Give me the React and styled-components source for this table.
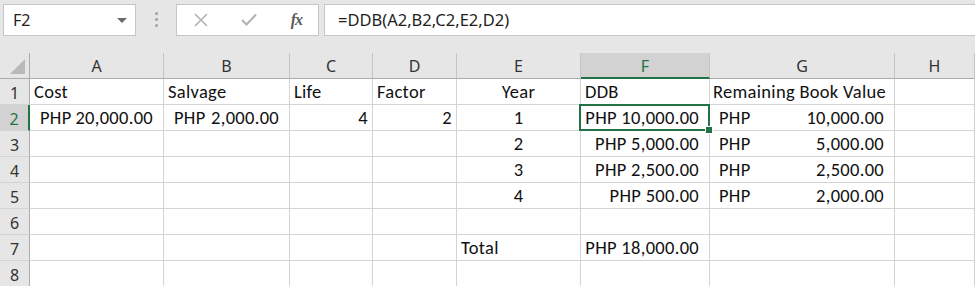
import React from 'react';
import styled, { createGlobalStyle, css } from 'styled-components';

const GlobalStyle = createGlobalStyle`
  html, body {
    margin: 0;
    padding: 0;
    background: #ffffff;
  }
  body {
    font-family: "Carlito", "Lato", "Liberation Sans", sans-serif;
    overflow: hidden;
  }
`;

const COLS = ['A', 'B', 'C', 'D', 'E', 'F', 'G', 'H'];
const SELECTED_COL = 'F';
const SELECTED_ROW = 2;

const Window = styled.div`
  width: 975px;
  height: 286px;
  background: #e6e6e6;
  overflow: hidden;
`;

const Toolbar = styled.div`
  display: flex;
  align-items: center;
  height: 46px;
  padding: 0 0 7px 3px;
  box-sizing: border-box;
  margin-bottom: 7px;
  font-family: "Noto Sans", "Open Sans", sans-serif;
`;

const Box = styled.div`
  height: 32px;
  box-sizing: border-box;
  background: #ffffff;
  border: 1px solid #c6c6c6;
  display: flex;
  align-items: center;
`;

const NameBox = styled(Box)`
  width: 133px;
  padding: 0 8px 0 9px;
  justify-content: space-between;
  font-size: 16px;
  color: #222;
`;

const Caret = styled.span`
  width: 0;
  height: 0;
  border-left: 5px solid transparent;
  border-right: 5px solid transparent;
  border-top: 5px solid #6a6a6a;
  margin-top: 2px;
`;

const Grip = styled.div`
  width: 40px;
  display: flex;
  flex-direction: column;
  align-items: center;
  gap: 3px;
  span {
    width: 3px;
    height: 3px;
    border-radius: 50%;
    background: #a0a0a0;
  }
`;

const ButtonsBox = styled(Box)`
  width: 143px;
  justify-content: space-between;
  padding: 0 16px 0 17px;
  margin-right: 5px;
`;

const Fx = styled.span`
  font-family: "Liberation Serif", "DejaVu Serif", serif;
  font-style: italic;
  font-weight: bold;
  font-size: 16px;
  color: #5a5a5a;
  letter-spacing: -1px;
`;

const FormulaBox = styled(Box)`
  flex: 1;
  padding-left: 13px;
  font-size: 16.5px;
  color: #1e1e1e;
  border-right: none;
`;

const Sheet = styled.div`
  display: grid;
  grid-template-columns: 30px 134px 126px 83px 84px 124px 129px 185px 1fr;
  grid-auto-rows: 26px;
  background: #ffffff;
`;

const HeadCell = styled.div`
  box-sizing: border-box;
  background: ${({ $active }) => ($active ? '#d2d2d2' : '#e6e6e6')};
  color: ${({ $active }) => ($active ? '#217346' : '#333')};
  font-family: "Noto Sans", "Open Sans", sans-serif;
  font-size: 16px;
  display: flex;
  align-items: center;
  justify-content: center;
  border-right: 1px solid #c4c4c4;
  border-bottom: 1px solid #ababab;
  ${({ $active }) =>
    $active &&
    css`
      border-bottom: 2px solid #217346;
    `}
`;

const ColHead = styled(HeadCell)`
  padding-top: 1px;
`;

const Corner = styled(HeadCell)`
  position: relative;
  border-right: 1px solid #ababab;
  &::after {
    content: '';
    position: absolute;
    right: 4px;
    bottom: 4px;
    width: 0;
    height: 0;
    border-left: 15px solid transparent;
    border-bottom: 15px solid #b9b9b9;
  }
`;

const RowHead = styled(HeadCell)`
  border-bottom: 1px solid #d4d4d4;
  border-right: 1px solid #ababab;
  padding-top: 2px;
  ${({ $active }) =>
    $active &&
    css`
      border-bottom: 1px solid #d4d4d4;
      border-right: 2px solid #217346;
    `}
`;

const Cell = styled.div`
  position: relative;
  box-sizing: border-box;
  border-right: 1px solid #d4d4d4;
  border-bottom: 1px solid #d4d4d4;
  font-size: 18.5px;
  letter-spacing: 0.3px;
  color: #111;
  display: flex;
  align-items: flex-end;
  padding: 0 ${({ $padRight }) => $padRight ?? 4}px 1px ${({ $padLeft }) => $padLeft ?? 4}px;
  white-space: nowrap;
  justify-content: ${({ $align }) =>
    $align === 'right' ? 'flex-end' : $align === 'center' ? 'center' : $align === 'split' ? 'space-between' : 'flex-start'};
  ${({ $selected }) =>
    $selected &&
    css`
      &::after {
        content: '';
        position: absolute;
        left: -2px;
        top: -1px;
        right: -1px;
        bottom: -1px;
        border: 2px solid #217346;
      }
      &::before {
        content: '';
        position: absolute;
        right: -4px;
        bottom: -4px;
        width: 6px;
        height: 6px;
        background: #217346;
        border: 1px solid #fff;
        z-index: 2;
      }
    `}
`;

// cell content per row, keyed by column letter
const rows = [
  {
    A: { text: 'Cost' },
    B: { text: 'Salvage' },
    C: { text: 'Life' },
    D: { text: 'Factor' },
    E: { text: 'Year', align: 'center' },
    F: { text: 'DDB' },
    G: { text: 'Remaining Book Value', padLeft: 3 },
  },
  {
    A: { acct: ['PHP', '20,000.00'], padLeft: 10, padRight: 10 },
    B: { acct: ['PHP', '2,000.00'], padLeft: 10, padRight: 10 },
    C: { text: '4', align: 'right' },
    D: { text: '2', align: 'right' },
    E: { text: '1', align: 'center' },
    F: { text: 'PHP 10,000.00', align: 'right', padRight: 10 },
    G: { acct: ['PHP', '10,000.00'], padLeft: 9, padRight: 10 },
  },
  {
    E: { text: '2', align: 'center' },
    F: { text: 'PHP 5,000.00', align: 'right', padRight: 10 },
    G: { acct: ['PHP', '5,000.00'], padLeft: 9, padRight: 10 },
  },
  {
    E: { text: '3', align: 'center' },
    F: { text: 'PHP 2,500.00', align: 'right', padRight: 10 },
    G: { acct: ['PHP', '2,500.00'], padLeft: 9, padRight: 10 },
  },
  {
    E: { text: '4', align: 'center' },
    F: { text: 'PHP 500.00', align: 'right', padRight: 10 },
    G: { acct: ['PHP', '2,000.00'], padLeft: 9, padRight: 10 },
  },
  {},
  {
    E: { text: 'Total' },
    F: { text: 'PHP 18,000.00', align: 'right', padRight: 10 },
  },
  {},
];

function CellView({ data, selected }) {
  if (!data) return <Cell $selected={selected} />;
  if (data.acct) {
    return (
      <Cell $align="split" $padLeft={data.padLeft} $padRight={data.padRight} $selected={selected}>
        <span>{data.acct[0]}</span>
        <span>{data.acct[1]}</span>
      </Cell>
    );
  }
  return (
    <Cell $align={data.align} $padLeft={data.padLeft} $padRight={data.padRight} $selected={selected}>
      {data.text}
    </Cell>
  );
}

function CrossIcon() {
  return (
    <svg width="14" height="14" viewBox="0 0 14 14">
      <path d="M1 1 L13 13 M13 1 L1 13" stroke="#b3b3b3" strokeWidth="1.6" fill="none" />
    </svg>
  );
}

function CheckIcon() {
  return (
    <svg width="16" height="13" viewBox="0 0 16 13">
      <path d="M1 7 L5.5 11.5 L15 1.5" stroke="#b3b3b3" strokeWidth="2" fill="none" />
    </svg>
  );
}

export default function App() {
  return (
    <>
      <GlobalStyle />
      <Window>
        <Toolbar>
          <NameBox>
            <span>F2</span>
            <Caret />
          </NameBox>
          <Grip>
            <span />
            <span />
            <span />
          </Grip>
          <ButtonsBox>
            <CrossIcon />
            <CheckIcon />
            <Fx>fx</Fx>
          </ButtonsBox>
          <FormulaBox>=DDB(A2,B2,C2,E2,D2)</FormulaBox>
        </Toolbar>
        <Sheet>
          <Corner />
          {COLS.map((c) => (
            <ColHead key={c} $active={c === SELECTED_COL}>
              {c}
            </ColHead>
          ))}
          {rows.map((row, i) => (
            <React.Fragment key={i}>
              <RowHead $active={i + 1 === SELECTED_ROW}>{i + 1}</RowHead>
              {COLS.map((c) => (
                <CellView
                  key={c}
                  data={row[c]}
                  selected={c === SELECTED_COL && i + 1 === SELECTED_ROW}
                />
              ))}
            </React.Fragment>
          ))}
        </Sheet>
      </Window>
    </>
  );
}
